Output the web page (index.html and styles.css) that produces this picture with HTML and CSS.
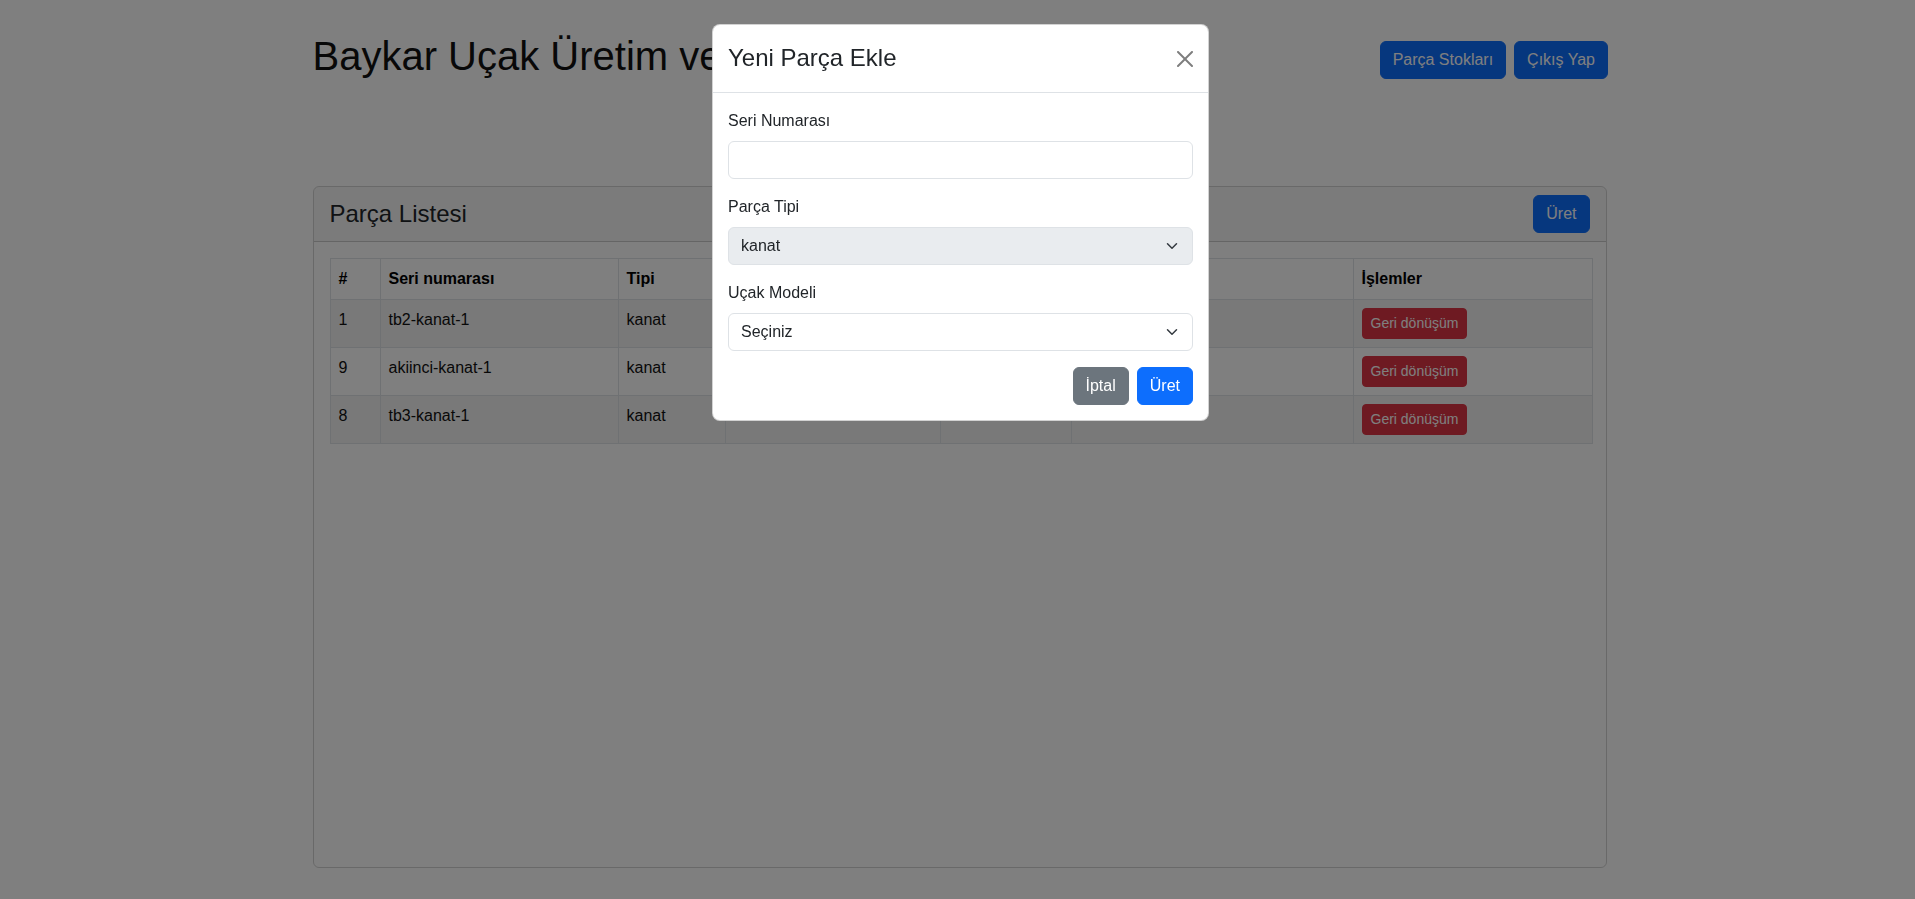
FILE: index.html
```html
<!DOCTYPE html>
<html lang="tr">
<head>
<meta charset="utf-8">
<title>Baykar Uçak Üretim</title>
<link rel="stylesheet" href="styles.css">
</head>
<body>
<div class="page">
  <header class="topbar">
    <h1 class="title">Baykar Uçak Üretim ve Montaj Sistemi</h1>
    <div class="actions">
      <button class="btn btn-primary">Parça Stokları</button>
      <button class="btn btn-primary">Çıkış Yap</button>
    </div>
  </header>

  <section class="card">
    <div class="card-header">
      <h4 class="card-title">Parça Listesi</h4>
      <button class="btn btn-primary">Üret</button>
    </div>
    <div class="card-body">
      <table class="table">
        <colgroup>
          <col class="w-num"><col class="w-seri"><col class="w-tip"><col class="w-model"><col class="w-durum"><col class="w-tarih"><col class="w-islem">
        </colgroup>
        <thead>
          <tr><th>#</th><th>Seri numarası</th><th>Tipi</th><th>Uçak Modeli</th><th>Durum</th><th>Üretim Tarihi</th><th>İşlemler</th></tr>
        </thead>
        <tbody>
          <tr><td>1</td><td>tb2-kanat-1</td><td>kanat</td><td>TB2</td><td>Stokta</td><td>18.12.2024</td><td><button class="btn btn-danger btn-sm">Geri dönüşüm</button></td></tr>
          <tr><td>9</td><td>akiinci-kanat-1</td><td>kanat</td><td>AKINCI</td><td>Stokta</td><td>18.12.2024</td><td><button class="btn btn-danger btn-sm">Geri dönüşüm</button></td></tr>
          <tr><td>8</td><td>tb3-kanat-1</td><td>kanat</td><td>TB3</td><td>Stokta</td><td>18.12.2024</td><td><button class="btn btn-danger btn-sm">Geri dönüşüm</button></td></tr>
        </tbody>
      </table>
    </div>
  </section>
</div>

<div class="backdrop"></div>

<div class="modal">
  <div class="modal-content">
    <div class="modal-header">
      <h4 class="modal-title">Yeni Parça Ekle</h4>
      <button class="btn-close" aria-label="Kapat">
        <svg width="16" height="16" viewBox="0 0 16 16"><path fill="#000" d="M.293.293a1 1 0 0 1 1.414 0L8 6.586 14.293.293a1 1 0 1 1 1.414 1.414L9.414 8l6.293 6.293a1 1 0 0 1-1.414 1.414L8 9.414l-6.293 6.293a1 1 0 0 1-1.414-1.414L6.586 8 .293 1.707a1 1 0 0 1 0-1.414z"/></svg>
      </button>
    </div>
    <div class="modal-body">
      <div class="field">
        <label class="form-label">Seri Numarası</label>
        <input class="form-control" type="text">
      </div>
      <div class="field">
        <label class="form-label">Parça Tipi</label>
        <div class="select-wrap">
          <select class="form-select" disabled><option>kanat</option></select>
          <svg class="chevron" width="16" height="12" viewBox="0 0 16 16"><path fill="none" stroke="#343a40" stroke-linecap="round" stroke-linejoin="round" stroke-width="2" d="m2 5 6 6 6-6"/></svg>
        </div>
      </div>
      <div class="field">
        <label class="form-label">Uçak Modeli</label>
        <div class="select-wrap">
          <select class="form-select"><option>Seçiniz</option></select>
          <svg class="chevron" width="16" height="12" viewBox="0 0 16 16"><path fill="none" stroke="#343a40" stroke-linecap="round" stroke-linejoin="round" stroke-width="2" d="m2 5 6 6 6-6"/></svg>
        </div>
      </div>
      <div class="modal-actions">
        <button class="btn btn-secondary">İptal</button>
        <button class="btn btn-primary">Üret</button>
      </div>
    </div>
  </div>
</div>
</body>
</html>
```

FILE: styles.css
```css
* { box-sizing: border-box; }

html, body {
  margin: 0;
  padding: 0;
  background: #fff;
  color: #212529;
  font-family: "Liberation Sans", Arial, sans-serif;
  font-size: 16px;
  line-height: 1.5;
  overflow: hidden;
}

.page {
  width: 1294px;
  margin-left: calc(50% - 645px);
}

.topbar {
  display: flex;
  justify-content: space-between;
  align-items: flex-start;
  padding-top: 32px;
}

.title {
  margin: 0;
  font-size: 40px;
  font-weight: 400;
  line-height: 48px;
  color: #111;
}

.actions {
  display: flex;
  gap: 8px;
  margin-top: 9px;
  margin-right: -1.5px;
}

.btn {
  font-family: inherit;
  font-size: 16px;
  line-height: 24px;
  padding: 6px 12px;
  border: 1px solid transparent;
  border-radius: 6px;
  cursor: pointer;
  white-space: nowrap;
}

.btn-primary { background: #0d6efd; border-color: #0d6efd; color: #fff; }
.btn-secondary { background: #6c757d; border-color: #6c757d; color: #fff; }
.btn-danger { background: #dc3545; border-color: #dc3545; color: #fff; }

.btn-sm {
  font-size: 14px;
  line-height: 21px;
  padding: 4px 8px;
  border-radius: 4px;
}

.card {
  margin-top: 106px;
  height: 682px;
  border: 1px solid rgba(0, 0, 0, 0.175);
  border-radius: 6px;
  display: flex;
  flex-direction: column;
  overflow: hidden;
}

.card-header {
  display: flex;
  justify-content: space-between;
  align-items: center;
  padding: 8px 16px;
  background: rgba(0, 0, 0, 0.03);
  border-bottom: 1px solid rgba(0, 0, 0, 0.175);
}

.card-title {
  margin: 0;
  font-size: 24px;
  font-weight: 400;
  line-height: 28.8px;
}

.card-body {
  padding: 16px;
  flex: 1;
}

.table {
  width: 100%;
  table-layout: fixed;
  border-collapse: collapse;
  vertical-align: top;
}

.w-num { width: 50px; }
.w-seri { width: 238px; }
.w-tip { width: 107px; }
.w-model { width: 215px; }
.w-durum { width: 131px; }
.w-tarih { width: 282px; }
.w-islem { width: 239px; }

.table th, .table td {
  border: 1px solid #dee2e6;
  padding: 8px;
  text-align: left;
  vertical-align: top;
  white-space: nowrap;
  overflow: hidden;
  color: #111;
}

.table th { font-weight: 700; color: #000; }

.table tbody tr:nth-child(odd) td {
  background: rgba(0, 0, 0, 0.05);
}

.backdrop {
  position: fixed;
  inset: 0;
  background: rgba(0, 0, 0, 0.5);
}

.modal {
  position: fixed;
  inset: 0;
}

.modal-content {
  width: 497px;
  margin: 24px 0 0 calc(50% - 245.5px);
  background: #fff;
  border: 1px solid rgba(0, 0, 0, 0.175);
  border-radius: 8px;
}

.modal-header {
  height: 68px;
  display: flex;
  justify-content: space-between;
  align-items: center;
  padding: 0 15px 0 15px;
  border-bottom: 1px solid #dee2e6;
}

.modal-title {
  margin: 0;
  font-size: 24px;
  font-weight: 400;
  line-height: 28.8px;
  color: #212529;
}

.btn-close {
  width: 16px;
  height: 16px;
  padding: 0;
  border: 0;
  background: transparent;
  opacity: 0.5;
  display: flex;
}

.modal-body {
  padding: 16px 15px 15px;
}

.field {
  margin-bottom: 16px;
}

.form-label {
  display: block;
  margin-bottom: 8px;
  line-height: 24px;
}

.form-control, .form-select {
  display: block;
  width: 100%;
  height: 38px;
  font-family: inherit;
  font-size: 16px;
  line-height: 24px;
  color: #212529;
  background: #fff;
  border: 1px solid #dee2e6;
  border-radius: 6px;
  padding: 6px 12px;
}

.select-wrap {
  position: relative;
}

.form-select {
  appearance: none;
  -webkit-appearance: none;
  padding-right: 36px;
  opacity: 1;
}

.form-select:disabled {
  background: #e9ecef;
  color: #212529;
}

.chevron {
  position: absolute;
  right: 13px;
  top: 13px;
  pointer-events: none;
}

.modal-actions {
  display: flex;
  justify-content: flex-end;
  gap: 8px;
}
```
